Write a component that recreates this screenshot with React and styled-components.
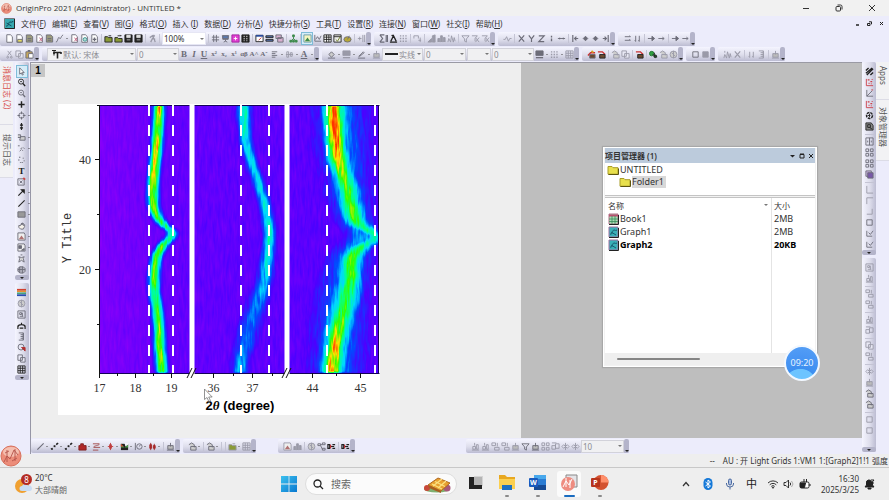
import React from 'react';
import styled, { createGlobalStyle, css } from 'styled-components';

const GlobalStyle = createGlobalStyle`
  * {
    box-sizing: border-box;
  }
  body {
    margin: 0;
    font-family: 'Noto Sans', 'Noto Sans CJK SC', sans-serif;
    font-size: 8px;
    color: #333;
    background: #eeeeee;
  }
  button, input, select {
    font-family: inherit;
    font-size: inherit;
    color: inherit;
    border: 0;
    padding: 0;
    margin: 0;
    background: none;
  }
`;

const Screen = styled.div`
  display: flex;
  flex-direction: column;
  min-height: 100vh;
  overflow: hidden;
  position: relative;
`;

const TitleBar = styled.header`
  display: flex;
  align-items: center;
  height: 16px;
  padding: 0 12px 0 1px;
  gap: 4px;
  background: #f1f1f1;
`;

const Title = styled.h1`
  flex: 1;
  margin: 0;
  font-family: 'Open Sans', 'Noto Sans', sans-serif;
  font-size: 8px;
  font-weight: 400;
  line-height: 16px;
`;

const WindowButtons = styled.div`
  display: flex;
  align-items: center;
  gap: ${p => (p.$small ? '4px' : '23px')};
`;

const GlyphButton = styled.button`
  display: flex;
  align-items: center;
  justify-content: center;
  width: ${p => p.$size || 10}px;
  height: ${p => p.$size || 10}px;
`;

const MenuBar = styled.nav`
  display: flex;
  align-items: center;
  height: 15px;
  padding: 0 4px;
  background: #ececfb;
`;

const MenuList = styled.div`
  display: flex;
  flex: 1;
  gap: 6px;
  margin-left: 6px;
`;

const MenuItem = styled.button`
  line-height: 14px;
  white-space: nowrap;
`;

const Dock = styled.div`
  display: flex;
  align-items: center;
  flex-shrink: 0;
  gap: 3px;
  background: #ececfb;
  ${p =>
    p.$vertical
      ? css`
          flex-direction: column;
          width: ${p.$wide ? '18px' : '14px'};
          padding-bottom: 2px;
          ${p.$wide && 'border-right: 1px solid #9696a6;'}
        `
      : css`
          height: ${p.$tall ? '16px' : '15px'};
        `}
`;

const Group = styled.div`
  display: flex;
  align-items: center;
  border-radius: 2px;
  ${p =>
    p.$vertical
      ? css`
          flex-direction: column;
          width: 14px;
          padding-top: 4px;
          background: linear-gradient(90deg, #f5f5ff, #dedeec 55%, #bcbcd2);
          ${p.$fill && 'flex: 1;'}
        `
      : css`
          height: 14px;
          padding-left: 4px;
          margin-left: ${p.$push || 0}px;
          background: linear-gradient(#f5f5ff, #dedeec 55%, #bcbcd2);
        `}
`;

const Handle = styled.span`
  display: flex;
  align-items: flex-end;
  justify-content: center;
  background: #b4b4ca;
  border-radius: 2px;
  ${p =>
    p.$vertical
      ? css`
          width: 14px;
          height: 5px;
          margin-top: auto;
        `
      : css`
          width: 5px;
          height: 14px;
        `}
  &::after {
    content: '';
    border: 2px solid transparent;
    border-top-color: #222;
    border-bottom: 0;
    margin-bottom: 1px;
  }
`;

const Tool = styled.button`
  display: flex;
  align-items: center;
  justify-content: center;
  width: 10px;
  height: 11px;
  ${p => p.$on && 'background: #d6ecf8; outline: 1px solid #7fbcd8;'}
`;

const Separator = styled.span`
  display: flex;
  align-items: center;
  justify-content: center;
  width: ${p => (p.$vertical ? '12px' : '4px')};
  height: ${p => (p.$vertical ? '4px' : '12px')};
  &::after {
    content: '';
    background: #c4c4d4;
    width: ${p => (p.$vertical ? '9px' : '1px')};
    height: ${p => (p.$vertical ? '1px' : '9px')};
  }
`;

const Caret = styled.span`
  display: flex;
  align-items: center;
  justify-content: center;
  width: ${p => (p.$tight ? 4 : 5)}px;
  &::after {
    content: '';
    border: ${p => (p.$combo ? 2 : 1)}px solid transparent;
    border-top-color: ${p => (p.$combo ? '#777' : '#444')};
    border-bottom: 0;
  }
`;

const SideTool = styled.div`
  display: flex;
  align-items: center;
  width: 18px;
  height: 11px;
  padding-left: 4px;
`;

const Combo = styled.label`
  display: flex;
  align-items: center;
  flex-shrink: 0;
  width: ${p => p.$w}px;
  height: 13px;
  margin-left: 1px;
  padding: 0 1px;
  background: ${p => (p.$live ? '#fff' : '#f0f0f2')};
  border: 1px solid ${p => (p.$live ? '#e6e6f4' : '#d2d2da')};
  color: ${p => (p.$live ? '#333' : '#8c8c92')};
  select {
    flex: 1;
    width: 0;
    min-width: 0;
    appearance: none;
    height: 11px;
    line-height: 11px;
    opacity: 1;
  }
`;

const Body = styled.div`
  display: flex;
  flex: 1;
  min-height: 0;
`;

const SideTabs = styled.div`
  display: flex;
  flex-direction: column;
  width: 13px;
  flex-shrink: 0;
  background: #ececfb;
`;

const SideTab = styled.button`
  writing-mode: vertical-rl;
  text-orientation: sideways;
  width: 13px;
  padding: ${p => p.$pad};
  font-size: 8px;
  line-height: 12px;
  text-align: left;
  background: #f2f2f4;
  border-bottom: 1px solid #dcdce6;
  color: ${p => (p.$alert ? '#d8504c' : '#555')};
`;

const Center = styled.div`
  display: flex;
  flex-direction: column;
  flex: 1;
  min-width: 0;
`;

const Workspace = styled.main`
  display: flex;
  flex: 1;
  position: relative;
  border-top: 1px solid #9a9aa4;
  background: #bebebe;
`;

const GraphWindow = styled.section`
  flex: 0 0 59%;
  background: #eeeeee;
`;

const LayerButton = styled.button`
  display: block;
  width: 14px;
  height: 13px;
  margin: 1px 0 27px;
  background: #c6c6c6;
  font-family: 'Liberation Sans', sans-serif;
  font-size: 10px;
  font-weight: 700;
  line-height: 13px;
  color: #000;
`;

const Sheet = styled.svg`
  display: block;
  margin-left: 27px;
  background: #fff;
`;

const Manager = styled.section`
  position: absolute;
  top: 84px;
  right: 45px;
  width: 214px;
  display: flex;
  flex-direction: column;
  padding: 0 1px 1px;
  background: #f2f2f2;
  border: 1px solid #fff;
  box-shadow: 0 0 1px 1px #a8a8a8;
`;

const ManagerHead = styled.div`
  display: flex;
  align-items: center;
  height: 15px;
  background: #bccbdc;
`;

const ManagerTitle = styled.h2`
  flex: 1;
  margin: 0;
  font-size: 8px;
  line-height: 15px;
  font-weight: 600;
`;

const Tree = styled.div`
  height: 33px;
  padding: 1px 2px;
  background: #fff;
  border-bottom: 1px solid #c4c4c4;
  font-size: 9px;
`;

const TreeRow = styled.div`
  display: flex;
  align-items: center;
  height: 12px;
  padding-left: ${p => (p.$child ? 12 : 0)}px;
  gap: 1px;
  line-height: 12px;
  span {
    padding-right: 2px;
    background: ${p => (p.$child ? '#d8d8d8' : 'none')};
  }
`;

const ListBox = styled.div`
  height: 156px;
  margin-top: 1px;
  border-top: 1px solid #c4c4c4;
  background: linear-gradient(90deg, #fff 166px, #e4e4e4 166px, #e4e4e4 167px, #fff 167px);
`;

const FileTable = styled.table`
  width: 100%;
  border-collapse: collapse;
  table-layout: fixed;
  font-size: 9px;
  line-height: 13px;
  th {
    font-size: 8px;
    font-weight: 400;
    text-align: left;
    height: 14px;
    padding: 0 3px;
  }
  th:first-child {
    width: 166px;
  }
  td {
    padding: 0 3px;
    height: 13px;
  }
`;

const Split = styled.span`
  display: flex;
  align-items: center;
  justify-content: ${p => (p.$ends ? 'space-between' : 'flex-start')};
  gap: 1px;
`;

const FileRow = styled.tr`
  font-weight: ${p => (p.$current ? 700 : 400)};
  color: ${p => (p.$current ? '#000' : '#333')};
`;

const ScrollTrack = styled.div`
  height: 12px;
  padding: 5px 12px;
  background: #efefef;
`;

const ScrollThumb = styled.div`
  width: 83px;
  height: 2px;
  border-radius: 1px;
  background: #858585;
`;

const Clock = styled.time`
  position: absolute;
  top: 282px;
  right: 42px;
  width: 36px;
  height: 36px;
  border: 2px solid #f2f8ff;
  border-radius: 50%;
  background: radial-gradient(circle at 45% 120%, #6cc4ff 38%, #3d8ff0 40%, #4a96f4 70%, #56a0f6);
  color: #e8f4ff;
  font-size: 9px;
  line-height: 32px;
  text-align: center;
`;

const StatusBar = styled.footer`
  display: flex;
  align-items: center;
  justify-content: flex-end;
  gap: 8px;
  height: 13px;
  padding-right: 1px;
  background: #eeeeee;
  white-space: nowrap;
`;

const Recorder = styled.button`
  position: absolute;
  left: 0;
  bottom: 33px;
  width: 22px;
  height: 22px;
`;

const Taskbar = styled.footer`
  display: grid;
  grid-template-columns: 1fr auto 1fr;
  align-items: center;
  height: 33px;
  padding: 0 14px;
  background: #eeeeee;
  border-top: 1px solid #c8c8c8;
`;

const Weather = styled.button`
  display: flex;
  align-items: center;
  gap: 2px;
  justify-self: start;
  text-align: left;
  line-height: 12px;
  small {
    display: block;
    font-size: 8px;
    color: #666;
  }
`;

const Apps = styled.div`
  display: flex;
  align-items: center;
  gap: 7px;
  margin-left: 3px;
`;

const AppButton = styled.button`
  display: flex;
  flex-direction: column;
  align-items: center;
  justify-content: space-between;
  width: 24px;
  height: 26px;
  padding-top: 3px;
  border-radius: 3px;
  background: ${p => (p.$active ? '#fbfbfb' : 'none')};
  &::after {
    content: '';
    width: ${p => (p.$active ? 11 : 4)}px;
    height: 2px;
    border-radius: 1px;
    background: ${p => (p.$active ? '#1a6cc0' : p.$open ? '#8a8a8a' : 'transparent')};
  }
`;

const Search = styled.label`
  display: flex;
  align-items: center;
  gap: 7px;
  width: 152px;
  height: 22px;
  padding: 0 4px 0 7px;
  border: 1px solid #dedede;
  border-radius: 11px;
  background: #fbfbfb;
  input {
    flex: 1;
    width: 0;
    font-size: 10px;
    outline: none;
  }
  input::placeholder {
    color: #666;
    opacity: 1;
  }
`;

const Tray = styled.div`
  display: flex;
  align-items: center;
  justify-self: end;
  gap: 10px;
`;

const LanguageButton = styled.button`
  font-size: 11px;
  line-height: 16px;
  color: #222;
`;

const TrayPair = styled.div`
  display: flex;
  align-items: center;
  gap: 4px;
`;

const DateTime = styled.div`
  text-align: right;
  line-height: 11px;
`;

/* ---------- icons, all drawn on a 10 x 10 grid ---------- */

const page = <path d="M2 .8h4l2.2 2.2v6.2H2z" fill="#fff" />;

const ICONS = {
  page,
  pageY: <g>{page}<path d="M3 6h5v3H3z" fill="#e8de60" /></g>,
  pageG: <g><path d="M1.5 1h5l2 2v6h-7z" fill="#9a9a7c" /><path d="M3 5h4M3 7h4" /></g>,
  pageR: <g>{page}<path d="M5 4l3 4M8 4L5 8" stroke="#c06080" /></g>,
  pageT: <g>{page}<circle cx="5.5" cy="6" r="2" stroke="#3a9090" fill="#b8e0d8" /></g>,
  pageK: <g>{page}<path d="M5 4v4M3 6h4" strokeWidth="1.6" /></g>,
  curve: <path d="M1 9c2 0 2-4 3-5s1 2 2 1 1-3 3-4" />,
  folder: <g><path d="M1 3h3l1 1h4v5H1z" fill="#8a9a38" /><path d="M5 2h3" /></g>,
  folderUp: <g><path d="M1 4h3l1 1h4v4H1z" fill="#8a9a38" /><path d="M4 2h4l-1-1" /></g>,
  save: <g><path d="M1 1h8v8H1z" fill="currentColor" /><path d="M3 1.5h4v2.5H3zM3 6.5h4" stroke="#fff" strokeWidth=".7" fill="#ddd" /></g>,
  run: <path d="M6 1l1 1-2 3 3 1M5 5L3 9M2 4l3-2 2 4 1 3" strokeWidth="1.5" />,
  print: <path d="M3 1v8M6 1v8M1 3.5h8M1 6.5h8" />,
  slide: <g><path d="M1 2h8M2 2v4h6V2M5 6v2M3 9l2-1 2 1" /><path d="M2 2h6v3H2z" fill="#5a7ab0" /></g>,
  magenta: <g><path d="M1 1h8v8H1z" fill="#e040d0" stroke="#a020a0" /><path d="M3 5h4M5 3v4" stroke="#fff" /></g>,
  film: <g><path d="M1 1h8v8H1z" fill="currentColor" /><path d="M3.5 2v6M6.5 2v6" stroke="#fff" strokeDasharray="1.5 1" /></g>,
  sheetB: <g><path d="M1 1.5h8v7H1z" fill="#fff" /><path d="M1 2h8" stroke="#2a4a9c" strokeWidth="2" /><path d="M4 7l3-3" stroke="#c03030" /></g>,
  rows: <g><path d="M1 2h8v2H1zM1 6h8v2H1z" fill="#5a78b8" /></g>,
  layers: <path d="M1 1h6v4H1zM3 4h6v5H3z" fill="#d8b0d0" />,
  tree: <g stroke="#3d8a4c"><path d="M5 3v3M2 8l3-3 3 3" /><path d="M4 1h2v2H4zM1 7h2v2H1zM7 7h2v2H7zM4 7h2v2H4z" fill="#3d8a4c" /></g>,
  picture: <g><path d="M1 1h8v8H1z" fill="#f4f4c0" stroke="#6a9aa8" /><path d="M2 8l3-4 3 4z" fill="#3d8a4c" stroke="none" /></g>,
  axes: <path d="M2 1v7h7M3 6l2-3 2 3 2-4" />,
  grid: <path d="M1 1h8v8H1zM1 3.5h8M1 6h8M4 1v8M6.5 1v8" fill="#fff" />,
  gridV: <g><path d="M1 1h8v8H1zM1 3h8" fill="#eee" /><path d="M3 6l2 2 3-5" stroke="#6a7a20" /></g>,
  disc: <g><ellipse cx="5" cy="6" rx="4" ry="3" fill="#b8a838" /><path d="M5 6l2-4" /></g>,
  split: <path d="M6.5 1v8M8.5 1v8M1 5h4M3 3v4" />,
  sigma: <path d="M1 1h5M1 9h5M1 1l3 4-3 4M8 1v8M9.5 1v8" strokeWidth="1.3" />,
  peak: <path d="M1 9h8M2 8l3-6 3 6M3 1l4 4" strokeWidth="1.5" />,
  dots: <path d="M1 2h8M1 5h8M1 8h8" strokeDasharray="1.5 1.5" strokeWidth="1.5" />,
  bracket: <path d="M1 5V2h5v3M8 4v5M6 7h3" />,
  ramp: <path d="M1 9l4-4v4zM6 9V2l3-1v8z" fill="currentColor" />,
  bars: <path d="M1 9V5h2v4M4 9V2h2v7M7 9V4h2v5" fill="currentColor" />,
  spikes: <path d="M1 9l1-4 2 4 1-7 2 7 1-5 1 4M2 1v2" />,
  funnel: <path d="M1 2h8L6 5.5V9L4 8V5.5z" />,
  funnelX: <path d="M1 2h6L4.500 5v3M5 4l4 5M9 4L5 9" />,
  wave: <path d="M.5 6h2l1.500-3 2 5 1.500-3h2" />,
  X: <path d="M2 1.500l6 7M8 1.500l-6 7" strokeWidth="1.300" />,
  Y: <path d="M2 1.500l3 4v3.500M8 1.500l-3 4" strokeWidth="1.300" />,
  Z: <path d="M2 2h6L2 8.500h6" strokeWidth="1.300" />,
  bar1: <path d="M5 2v2M5 5v3" strokeWidth="1.500" />,
  dash: <path d="M1 5h8M3 4v2M7 4v2" />,
  first: <path d="M2 1v8M8 5H4M6 3L4 5l2 2" strokeWidth="1.300" />,
  last: <path d="M8 1v8M2 5h4M4 3l2 2-2 2" strokeWidth="1.300" />,
  point: <path d="M5 2.500L7.500 5 5 7.500 2.500 5z" fill="currentColor" />,
  pairH: <path d="M2 3h6M2 7h6M7 2l1.500 1M7 6l1.500 1" />,
  pairV: <path d="M3 2v6M7 2v6M2 7l1 1.500M6 7l1 1.500" />,
  arrowR: <path d="M1 5h5M5.500 2.500L8.500 5l-3 2.500z" fill="currentColor" />,
  thinR: <path d="M1.500 5h6M6 3.500L8 5 6 6.500" />,
  cut: <path d="M3 1l4 5M7 1L3 6M2 8a1 1 0 1 0 2 0 1 1 0 1 0-2 0M6 8a1 1 0 1 0 2 0 1 1 0 1 0-2 0" />,
  copy: <path d="M1 1h5v6H1zM4 4h5v5H4z" fill="#e8e8f4" />,
  paste: <g><path d="M1 2h7v7H1z" fill="#c8a858" /><path d="M4 4h5v5H4z" fill="#fff" /><path d="M3 1h3" strokeWidth="2" /></g>,
  align: <path d="M2 2h6M2 4h4M2 6h6M2 8h4" />,
  dist: <path d="M1 5h8M2 2h2v6H2zM6 3h2v4H6z" />,
  bucket: <path d="M2 5l3-3 3 3-3 3zM1 9h8" fill="#ccc" />,
  swatch: <g><path d="M1 1h8v5H1z" fill="currentColor" /><path d="M1 8.500h8" strokeWidth="1.500" /></g>,
  pen: <path d="M2 7l5-5 1 1-5 4zM1 9h8" />,
  cluster: <path d="M5 1v4M2 4h6v4H2zM1 9h8" fill="#bbb" />,
  table: <path d="M1 1h8v8H1zM1 3.600h8M1 6.300h8M3.600 1v8M6.300 1v8" />,
  redbox: <g><path d="M1 6l3-3h5" stroke="#cc3030" strokeWidth="1.500" /><path d="M3 5h6v4H3z" fill="#6a4a30" /><path d="M5 1l2 2" stroke="#d8a020" strokeWidth="2" /></g>,
  redbox2: <g><path d="M1 2h5l3 3" stroke="#cc3030" strokeWidth="1.500" /><path d="M3 5h6v4H3z" fill="#6a4a30" /></g>,
  stack: <path d="M1 3l3-2 3 2v3M3 5h6v4H3z" fill="#ccc" />,
  green: <g><circle cx="3" cy="4" r="2.500" fill="#2fa040" stroke="#207030" /><path d="M4 5l5 3M6 3v3" /><circle cx="7" cy="7" r="1.500" fill="#205028" /></g>,
  ball: <g><circle cx="5" cy="5" r="3.800" fill="#ccc" /><path d="M3 3l4 4M5 1v8" /></g>,
  square: <path d="M2 2h6v6H2z" />,
  squareF: <path d="M2 2h6v6H2z" fill="currentColor" />,
  pointer: <path d="M3 1v7l1.800-1.500L6 9l1-.5-1.200-2.300H8z" fill="#fff" />,
  zoom: <g><circle cx="4.500" cy="4" r="2.800" /><path d="M6.500 6L9 9" strokeWidth="1.600" /><path d="M3.500 4h2" /></g>,
  plus: <path d="M5 1.500v7M1.500 5h7" strokeWidth="1.600" />,
  target: <g><circle cx="5" cy="5" r="3" /><path d="M5 .5v3M5 6.500v3M.5 5h3M6.500 5h3" /></g>,
  colon: <path d="M5 1v3M5 6v3M3.500 3L5 4.500 6.500 3M3.500 7L5 5.500 6.500 7" strokeWidth="1.300" />,
  select: <path d="M1 2h3v3H1M4 4h5v4H3z" fill="#ccc" />,
  mask: <path d="M1 2h2M4 5l3-1 2 2M3 8l2-2 2 2" strokeDasharray="2 1" />,
  scatter: <path d="M3 2v1M7 3v1M2 5v1M8 6v1M4 8v1M6 8v1" strokeWidth="1.500" />,
  note: <g><path d="M1 2h7v7H1zM3 4l3 3M6 4L3 7" /><path d="M7 1l2 2" stroke="#c44" strokeWidth="2" /></g>,
  arrowUp: <path d="M1.500 8.500L7 3M5 2h3v3z" strokeWidth="1.300" fill="currentColor" />,
  line: <path d="M1.500 8.500l7-7" strokeWidth="1.200" />,
  rect: <path d="M1 2h8v6H1z" fill="#999" />,
  hand: <path d="M2 5v2l2 2h3l1.500-3V4L7 5V2.500L6 4V2L5 4V2.500L4 5z" fill="#f4f0e8" />,
  image: <g><path d="M1 1h7l1 2v6H1z" fill="#eee" /><path d="M2 8l3-4 3 4z" fill="#b07070" stroke="none" /></g>,
  image2: <g><path d="M1 1h7l1 2v6H1z" fill="#eee" /><path d="M2 3h3v3H2zM5 8h3V6z" fill="currentColor" /></g>,
  people: <path d="M2 9l1-4-1-2 3 1 3-1-1 2 1 4-3-2zM4 1h2" fill="#ddd" />,
  globe: <path d="M3 2h4l2 2v3L7 9H4L1 7V4zM3 2v7M6 2v7M1 5h8" fill="#b4b4c0" />,
  rainbow: <g stroke="none"><path d="M0 1h10v2H0z" fill="#d04030" /><path d="M0 3h10v1.500H0z" fill="#e89030" /><path d="M0 5h10v1.500H0z" fill="#309868" /><path d="M0 7h10v2H0z" fill="#2850b0" /></g>,
  legend: <path d="M1 1h8v8H1zM3 3h2v2H3zM6 3v4M3 7h4" />,
  bow: <path d="M5 2v2M1 7c0-4 8-4 8 0M1 5v4M9 5v4M3 8h4" strokeWidth="1.300" />,
  ladder: <path d="M2 1h5v8H2M4 3h3M4 5h3M4 7h3M7 1v8" />,
  clockR: <g><circle cx="4.500" cy="4.500" r="3.300" /><path d="M5 5h4v4z" fill="#b03030" stroke="#b03030" /></g>,
  zigzag: <path d="M1 4l3-3M1 7l7-6M2 9l7-7M6 9l3-3" strokeWidth="1.500" />,
  axisR: <g stroke="#cc4048"><path d="M1.500 1v7.500H9" /><path d="M3 2h2M6 4h2M4 6h1M7 6v1M8 1v1" strokeWidth="1.400" /></g>,
  axisK: <g><path d="M2 1v7h7M2 8l6-6" /><path d="M7 1h2" stroke="#c44" /></g>,
  gear: <g><circle cx="5" cy="5" r="3.300" strokeWidth="1.600" strokeDasharray="3 1" /><path d="M5 3v4M3 5h3" /></g>,
  flag: <path d="M1 1h6l2 3v5H1zM3 3h3v3H3zM5 6l3 2" fill="#888" />,
  two: <path d="M1 1h8v8H1zM5 1v8M3 4v2M7 4v2" />,
  four: <path d="M1 1h3v3H1zM6 1h3v3H6zM1 6h3v3H1zM6 6h3v3H6z" />,
  purple: <g><path d="M1 1h6v6H1z" fill="#c8b0e0" /><path d="M3 3h6v6H3z" fill="#7858a8" /></g>,
  L: <path d="M2 1v8h7" />,
  cornerT: <path d="M2 9V2h7" />,
  cornerR: <path d="M2 8h6V2" />,
  check: <path d="M2 2v6h6M4 4l2 2 3-4" />,
  steps: <path d="M1 1h4v3H1zM4 6h5v3H4zM7 1v4" />,
  alignA: <path d="M1 9h8M2 5h3v3H2zM6 3h2v5H6zM4 1v3" />,
  ovals: <path d="M1 4h4v4H1zM5 2h4v5H5zM1 1h5" />,
  gem: <path d="M1 5l2-2 2 2-2 2zM5 5l2-2 2 2-2 2zM5 1v8" />,
  lineDots: <path d="M1 8l2-1M4 5l2-1M7 3l2-2M2 8h1M5 5h1M7 2h1" strokeWidth="1.600" />,
  column: <path d="M1 9V4h2V2h3v2h3v5z" fill="#b02828" stroke="#802020" />,
  ribbon: <path d="M1 2h7c1 2-7 2-6 4h7M1 9h6" stroke="#a04848" />,
  cross: <path d="M5 1v8M2 5h6M4 3h2v4H4z" fill="#cc3030" stroke="#c04040" />,
  candle: <path d="M3 1v8M7 2v7M2 3h2v4H2zM6 4h2v3H6z" fill="#cc3030" stroke="#a02828" />,
  terrain: <g stroke="none"><path d="M1 2h8v7H1z" fill="#222" /><path d="M1 2l4 4 4-3v3H1z" fill="#48a048" /><path d="M1 2l3 3H1z" fill="#d04030" /><path d="M5 1h4v2L6 5z" fill="#f4f4fc" /></g>,
  dial: <g><circle cx="6" cy="5" r="3" /><path d="M1.500 1v8M6 5l1-2" /></g>,
  hub: <path d="M1 2h3v2H1zM6 1h3v2H6zM6 7h3v2H6zM4 3l2 0M4 4l2 4" />,
  hubR: <g><path d="M1 3h2v4H1zM3 5h5M6 3h3M6 7h3" strokeWidth="1.300" /><path d="M4 3v4" stroke="#c03030" strokeWidth="1.300" /></g>,
};

const LETTERS = { B: 'B', I: 'I', U: 'U', sup: 'x²', sub: 'x₂', both: 'x¹', greek: 'αβ', bigA: 'A^', smallA: 'Aˇ', A: 'A', T: 'T' };

const Letter = styled.span`
  font-family: 'Liberation Serif', serif;
  font-size: ${p => (p.$small ? 7 : 9)}px;
  font-weight: 700;
  line-height: 10px;
  font-style: ${p => (p.$name === 'I' ? 'italic' : 'normal')};
  text-decoration: ${p => (p.$name === 'U' || p.$name === 'A' ? 'underline' : 'none')};
  color: ${p => p.$tone};
`;

const TONES = { g: '#9a9aa8', k: '#222', r: '#a83030', m: '#6c6c78' };

const Icon = ({ name, tone = 'm' }) => {
  if (LETTERS[name]) {
    return (
      <Letter $name={name} $small={LETTERS[name].length > 1} $tone={TONES[tone]}>
        {LETTERS[name]}
      </Letter>
    );
  }
  return (
    <svg width="9" height="9" viewBox="0 0 10 10" fill="none" stroke="currentColor" color={TONES[tone]} aria-hidden="true">
      {ICONS[name]}
    </svg>
  );
};

const ComboBox = ({ label, value, w, live, mark }) => (
  <Combo $w={w} $live={live}>
    {mark === 'font' && (
      <svg width="14" height="10" viewBox="0 0 14 10" stroke="#222" fill="none" aria-hidden="true">
        <path d="M3 1.500h4M5 1.500v5" />
        <path d="M5 3.500h7M8.500 3.500v6M5 3v2M12 3v2" strokeWidth="1.600" />
      </svg>
    )}
    {mark === 'line' && (
      <svg width="15" height="4" aria-hidden="true">
        <path d="M1 2h13" stroke="#222" strokeWidth="2" />
      </svg>
    )}
    <select aria-label={label} defaultValue={value}>
      <option>{value}</option>
    </select>
    <Caret $combo />
  </Combo>
);

/* tokens: "|" separator, "v" drop-down caret, "name.tone", "*name" pressed */
const Toolbar = ({ items, vertical, push, fill, carets, tight }) => (
  <Group $vertical={vertical} $push={push} $fill={fill} role="toolbar">
    {items.map((item, i) => {
      if (typeof item !== 'string') return <React.Fragment key={i}>{item}</React.Fragment>;
      return item.split(' ').map((token, j) => {
        const key = `${i}-${j}`;
        if (token === '|') return <Separator key={key} $vertical={vertical} />;
        if (token === 'v') return <Caret key={key} $tight={tight} />;
        const on = token[0] === '*';
        const hasCaret = token.endsWith('+');
        const [name, tone] = token.replace('*', '').replace('+', '').split('.');
        const tool = (
          <Tool key={key} $on={on} aria-label={name}>
            <Icon name={name} tone={tone} />
          </Tool>
        );
        return carets ? (
          <SideTool key={key}>
            {tool}
            {hasCaret && <Caret $tight />}
          </SideTool>
        ) : (
          tool
        );
      });
    })}
    <Handle $vertical={vertical} />
  </Group>
);

/* ---------- contour plot ---------- */

// each knot: y, centre x, half width, intensity 0..1
const PEAKS = [
  { base: 0.13, knots: [[1, 101, 8, 0.84], [24, 100, 8, 0.84], [51, 98, 8, 0.86], [71, 96, 8, 0.86], [91, 95, 8, 0.8], [104, 96, 8, 0.78], [114, 100, 8, 0.72], [122, 107, 8, 0.62], [128, 114, 8, 0.56], [134, 112, 8, 0.6], [141, 105, 8, 0.68], [151, 99.5, 8, 0.75], [168, 96.5, 8, 0.73], [184, 96.5, 8, 0.71], [204, 99, 8, 0.68], [224, 101, 8, 0.77], [244, 102, 8, 0.79], [269, 104, 8, 0.76]] },
  { base: 0.14, knots: [[1, 186, 9, 0.53], [21, 186.5, 9, 0.52], [38, 188, 8, 0.48], [58, 193.5, 8, 0.45], [78, 200, 8, 0.45], [98, 206.5, 8, 0.48], [118, 210, 8, 0.5], [134, 211.5, 8, 0.53], [158, 209, 9, 0.48], [178, 206, 10, 0.42], [198, 200, 12, 0.35], [218, 193, 13, 0.32], [238, 188, 13, 0.32], [251, 184, 11, 0.36], [269, 182, 10, 0.45]] },
  { base: 0.14, knots: [[1, 283, 32, 0.31], [51, 286, 31, 0.32], [91, 291, 26, 0.32], [118, 298, 23, 0.35], [132, 304, 18, 0.38], [151, 292, 26, 0.34], [201, 283, 31, 0.33], [236, 281, 32, 0.32], [269, 280, 31, 0.32]] },
  { base: 0.3, knots: [[1, 276, 13, 0.97], [24, 277, 13, 0.97], [51, 279.5, 12, 0.93], [61, 282, 12, 0.8], [81, 288.5, 13, 0.71], [98, 292, 13, 0.69], [114, 296, 12, 0.74], [122, 302, 12, 0.64], [128, 312, 10, 0.58], [132, 317, 8, 0.54], [138, 312, 10, 0.58], [144, 301, 13, 0.64], [154, 294, 12, 0.75], [178, 291.5, 13, 0.68], [191, 289, 15, 0.64], [211, 284, 15, 0.67], [228, 279.5, 14, 0.8], [244, 277, 13, 0.87], [269, 274, 13, 0.92]] },
];

const LEVELS = [1, 0.88, 0.76, 0.64, 0.52, 0.4, 0.28];

const grey = v => {
  const n = Math.round(v * 255);
  return `rgb(${n},${n},${n})`;
};

// smooths the knots with a Catmull-Rom step so that the ribbon has no corners
const refine = knots => {
  const out = [];
  for (let i = 0; i < knots.length - 1; i++) {
    const [a, b, c, d] = [knots[i - 1] || knots[i], knots[i], knots[i + 1], knots[i + 2] || knots[i + 1]];
    for (let s = 0; s < 4; s++) {
      const t = s / 4;
      out.push(
        b.map((v, k) =>
          k === 1
            ? 0.5 * (2 * v + (c[k] - a[k]) * t + (2 * a[k] - 5 * v + 4 * c[k] - d[k]) * t * t + (3 * v - a[k] - 3 * c[k] + d[k]) * t ** 3)
            : v + (c[k] - v) * t
        )
      );
    }
  }
  out.push(knots[knots.length - 1]);
  return out;
};

const Ribbon = ({ id, peak }) => {
  const pts = refine(peak.knots);
  return LEVELS.map((level, i) => {
    const weight = Math.exp(-2.6 * level * level);
    const left = pts.map(([y, x, w]) => `${x - w * level},${y}`);
    const right = pts.map(([y, x, w]) => `${x + w * level},${y}`).reverse();
    return (
      <g key={level}>
        <linearGradient id={`${id}-${i}`} gradientUnits="userSpaceOnUse" x1="0" x2="0" y1="1" y2="269">
          {peak.knots.map(([y, , , v]) => (
            <stop key={y} offset={(y - 1) / 268} stopColor={grey(Math.min(1, peak.base + (v - peak.base) * weight * 1.2))} />
          ))}
        </linearGradient>
        <polygon points={[...left, ...right].join(' ')} fill={`url(#${id}-${i})`} />
      </g>
    );
  });
};

const Y_TICKS = [[55.5, '40'], [165.5, '20']];
const X_TICKS = [[41.5, '17'], [77.5, '18'], [113.5, '19'], [155.5, '36'], [194.5, '37'], [254.5, '44'], [302.5, '45']];
const GUIDES = [91, 115, 183, 211, 269, 317];
const BREAKS = [134, 229];

const Plot = () => (
  <Sheet width="322" height="311" viewBox="0 0 322 311" role="img" aria-label="Contour plot">
    <defs>
      <filter id="rainbow" filterUnits="userSpaceOnUse" x="42" y="1" width="279" height="268" colorInterpolationFilters="sRGB">
        <feGaussianBlur in="SourceGraphic" stdDeviation="1.1 .8" result="soft" />
        <feTurbulence type="fractalNoise" baseFrequency=".38 .06" numOctaves="2" seed="7" />
        <feColorMatrix values="1 0 0 0 0  1 0 0 0 0  1 0 0 0 0  0 0 0 0 1" result="grain" />
        <feComposite in="soft" in2="grain" operator="arithmetic" k1=".5" k2=".75" k3=".07" k4="-.035" />
        <feComponentTransfer>
          <feFuncR type="table" tableValues=".56 .3 0 0 0 .2 1 1" />
          <feFuncG type="table" tableValues="0 0 .3 .85 1 1 .88 .2" />
          <feFuncB type="table" tableValues=".98 1 1 1 .6 0 0 0" />
        </feComponentTransfer>
      </filter>
      <linearGradient id="floor">
        <stop offset="0" stopColor="#0a0a0a" />
        <stop offset=".3" stopColor="#181818" />
        <stop offset="1" stopColor="#202020" />
      </linearGradient>
    </defs>
    <g filter="url(#rainbow)">
      <rect x="38" y="-3" width="288" height="276" fill="url(#floor)" />
      {PEAKS.map((peak, i) => (
        <Ribbon key={i} id={`peak${i}`} peak={peak} />
      ))}
    </g>
    <path d="M41.500 269.500h280M41.500 1.500h280M320.500 1v268" stroke="#14005a" fill="none" />
    <path d={BREAKS.map(x => `M${x} 0v271`).join('')} stroke="#fff" strokeWidth="5" />
    <path d={BREAKS.map(x => `M${x - 5} 274l5-10M${x - 1} 274l5-10`).join('')} stroke="#111" />
    <path d={GUIDES.map(x => `M${x} 1v268`).join('')} stroke="#fff" strokeWidth="2" strokeDasharray="11 9" />
    <path
      d={`M41.500 1v273M39 1.500h3M39 110.500h3M39 220.500h3${Y_TICKS.map(([y]) => `M37 ${y}h5`).join('')}${X_TICKS.map(([x]) => `M${x} 269v5`).join('')}M59.500 269v3M95.500 269v3M175.500 269v3M214.500 269v3M278.500 269v3`}
      stroke="#111"
    />
    <g fontFamily="'Liberation Serif', serif" fontSize="12" fill="#333">
      {Y_TICKS.map(([y, text]) => (
        <text key={text} x="33" y={y + 4} textAnchor="end">{text}</text>
      ))}
      {X_TICKS.map(([x, text]) => (
        <text key={text} x={x} y="288" textAnchor="middle">{text}</text>
      ))}
    </g>
    <text transform="translate(13 134) rotate(-90)" textAnchor="middle" fontFamily="'Liberation Mono', monospace" fontSize="12" fill="#333">
      Y Title
    </text>
    <text x="182" y="306" textAnchor="middle" fontFamily="'Liberation Sans', sans-serif" fontSize="13" fontWeight="700" fill="#000">
      2<tspan fontFamily="'Liberation Serif', serif" fontStyle="italic">θ</tspan> (degree)
    </text>
    <path d="M146.500 285v10.500l2.500-2 1.800 4 1.700-.8-1.800-3.700h3.500z" fill="#fff" stroke="#777" strokeWidth=".8" />
  </Sheet>
);

/* ---------- project manager ---------- */

const FolderIcon = () => (
  <svg width="12" height="10" viewBox="0 0 12 10" aria-hidden="true">
    <path d="M1 1.500h4l1 1.200h5v6.500H1z" fill="#e8e04c" stroke="#a89c28" />
    <path d="M1.500 9.500h10V3.500" stroke="#5c5410" fill="none" />
  </svg>
);

const FileIcon = ({ kind }) => (
  <svg width="11" height="12" viewBox="0 0 11 12" aria-hidden="true">
    <path d="M1 1h9v10H1z" fill={kind === 'book' ? '#a8dcb4' : '#38b0b8'} stroke={kind === 'book' ? '#b07088' : '#a070a0'} />
    {kind === 'book' ? (
      <g>
        <path d="M1 2.500h9" stroke="#b85070" strokeWidth="2" />
        <path d="M1 6h9M1 8.500h9M4 3v8M7 3v8" stroke="#3a8a5c" strokeWidth=".8" />
      </g>
    ) : (
      <path d="M2 8c3 1 2-4 4-4s1 1 3 0M3 6l5 3" stroke="#155a70" fill="none" />
    )}
    <path d="M1 11.500h9.500V2" stroke="#222" fill="none" />
  </svg>
);

const FILES = [
  { name: 'Book1', size: '2MB', kind: 'book' },
  { name: 'Graph1', size: '2MB', kind: 'graph' },
  { name: 'Graph2', size: '20KB', kind: 'graph', current: true },
];

const ProjectManager = () => (
  <Manager>
    <ManagerHead>
      <ManagerTitle>项目管理器 (1)</ManagerTitle>
      <GlyphButton $size={9} aria-label="Options">
        <svg width="6" height="6"><path d="M0 2h5L2.500 4.500z" fill="#222" /></svg>
      </GlyphButton>
      <GlyphButton $size={9} aria-label="Maximize">
        <svg width="6" height="6"><path d="M1 1.500h4v3.500H1zM1 1h4" stroke="#222" fill="none" /></svg>
      </GlyphButton>
      <GlyphButton $size={9} aria-label="Close">
        <svg width="6" height="6"><path d="M1 1l4 4M5 1L1 5" stroke="#222" /></svg>
      </GlyphButton>
    </ManagerHead>
    <Tree>
      <TreeRow>
        <FolderIcon />
        <span>UNTITLED</span>
      </TreeRow>
      <TreeRow $child>
        <FolderIcon />
        <span>Folder1</span>
      </TreeRow>
    </Tree>
    <ListBox>
      <FileTable>
        <thead>
          <tr>
            <th><Split $ends>名称<Caret $combo /></Split></th>
            <th>大小</th>
          </tr>
        </thead>
        <tbody>
          {FILES.map(file => (
            <FileRow key={file.name} $current={file.current}>
              <td><Split><FileIcon kind={file.kind} />{file.name}</Split></td>
              <td>{file.size}</td>
            </FileRow>
          ))}
        </tbody>
      </FileTable>
    </ListBox>
    <ScrollTrack>
      <ScrollThumb />
    </ScrollTrack>
  </Manager>
);

/* ---------- shell ---------- */

const MENUS = [
  ['文件', 'F'], ['编辑', 'E'], ['查看', 'V'], ['图', 'G'], ['格式', 'O'], ['插入 ', 'I'], ['数据', 'D'], ['分析', 'A'],
  ['快捷分析', 'S'], ['工具', 'T'], ['设置', 'R'], ['连接', 'N'], ['窗口', 'W'], ['社交', 'I'], ['帮助', 'H'],
];

const OriginMark = ({ size }) => (
  <svg width={size} height={size} viewBox="0 0 22 22" aria-hidden="true">
    <circle cx="11" cy="11" r="10" fill="#ec8d7a" stroke="#d8705c" />
    <ellipse cx="11" cy="7" rx="8" ry="5" fill="#f8ccbe" opacity=".8" />
    <path d="M4 17l3-6 3 3 4-9 4 5M5 8l4-2M12 16l5-3M7 5v12M15 4v12" stroke="#b4544a" strokeWidth=".9" fill="none" />
  </svg>
);

const App = () => (
  <>
    <GlobalStyle />
    <Screen>
      <TitleBar>
        <OriginMark size={11} />
        <Title>OriginPro 2021 (Administrator) - UNTITLED *</Title>
        <WindowButtons>
          <GlyphButton aria-label="Minimize">
            <svg width="8" height="8"><path d="M1 4.500h6" stroke="#333" /></svg>
          </GlyphButton>
          <GlyphButton aria-label="Restore">
            <svg width="8" height="8" fill="none" stroke="#333"><rect x="1" y="2.500" width="4.500" height="4.500" rx="1" /><path d="M2.500 1h3a1.500 1.500 0 0 1 1.500 1.500v3" /></svg>
          </GlyphButton>
          <GlyphButton aria-label="Close">
            <svg width="8" height="8"><path d="M1 1l6 6M7 1L1 7" stroke="#333" /></svg>
          </GlyphButton>
        </WindowButtons>
      </TitleBar>

      <MenuBar>
        <svg width="11" height="11" viewBox="0 0 11 11" aria-hidden="true">
          <path d="M.5.5h10v10H.5z" fill="#38a8b0" stroke="#777" />
          <path d="M2 8c3 1 2-4 4-4s2 1 3-1M2.500 5l5 3" stroke="#124c60" fill="none" />
          <path d="M1 10.500h9.500V1" stroke="#222" fill="none" />
        </svg>
        <MenuList>
          {MENUS.map(([text, hotkey]) => (
            <MenuItem key={text}>{text}(<u>{hotkey}</u>)</MenuItem>
          ))}
        </MenuList>
        <WindowButtons $small>
          <GlyphButton $size={8} aria-label="Minimize graph">
            <svg width="5" height="5"><path d="M1 4h3" stroke="#222" strokeWidth="1.500" /></svg>
          </GlyphButton>
          <GlyphButton $size={8} aria-label="Restore graph">
            <svg width="5" height="5" fill="none" stroke="#222"><path d="M.5 2.500h2.500v2H.5zM2 .8h2.500v2.500" /></svg>
          </GlyphButton>
          <GlyphButton $size={8} aria-label="Close graph">
            <svg width="5" height="5"><path d="M1 1l3 3M4 1L1 4" stroke="#222" /></svg>
          </GlyphButton>
        </WindowButtons>
      </MenuBar>

      <Dock>
        <Toolbar
          items={[
            'page pageY pageG pageR pageG curve v pageR pageT pageK | folder.k folderUp.k save.k save.k | run.g |',
            <ComboBox label="Zoom" value="100%" w={44} live />,
            '| print slide magenta film.k | sheetB.k rows.k layers | tree | *picture axes grid.k gridV.k disc | split.g',
          ]}
        />
        <Toolbar items={['sigma peak.k dots.g | bracket.g | ramp.g bars.g spikes.g | funnel.g funnelX.g funnelX.g']} />
        <Toolbar items={['wave.g | X Y Z bar1 dash | first point point last']} />
        <Toolbar items={['pairH pairV | arrowR thinR | arrowR thinR']} />
      </Dock>

      <Dock $tall>
        <Toolbar items={['cut.g copy.g paste']} />
        <Toolbar
          items={[
            <ComboBox label="Font" value="默认: 宋体" w={89} mark="font" />,
            <ComboBox label="Font size" value="0" w={42} />,
            'B I U sup sub both greek bigA smallA align v dist.g v A v',
          ]}
        />
        <Toolbar
          items={[
            'bucket v swatch.g v pen v cluster.g',
            <ComboBox label="Line style" value="实线" w={41} mark="line" />,
            <ComboBox label="Line width" value="0" w={42} />,
            <ComboBox label="Pattern" value="" w={24} />,
            <ComboBox label="Pattern size" value="0" w={42} />,
            'swatch v dots.g v table.g',
          ]}
        />
        <Toolbar items={['redbox redbox2.k | stack.g copy.g | redbox2.k | green.k stack.g ball.g']} />
        <Toolbar items={['square squareF.g']} />
        <Toolbar items={['spikes.g X.g | pairV.g ladder.g | cluster.g']} />
      </Dock>

      <Body>
        <SideTabs>
          <SideTab $alert $pad="4px 0 15px">消息日志 (2)</SideTab>
          <SideTab $pad="9px 0 11px">提示日志</SideTab>
        </SideTabs>
        <Dock $vertical $wide>
          <Toolbar
            vertical
            carets
            items={['*pointer zoom.k zoom plus.k target+ colon.k select+ mask+ scatter T.k note arrowUp.k+ line.k+ rect+ hand image+ image2+ people globe']}
          />
          <Toolbar vertical carets items={['rainbow ball.g legend bow.k ladder clockR copy table.k']} />
        </Dock>
        <Center>
          <Workspace>
            <GraphWindow>
              <LayerButton>1</LayerButton>
              <Plot />
            </GraphWindow>
            <ProjectManager />
            <Clock>09:20</Clock>
          </Workspace>
          <Dock $tall>
            <Toolbar tight items={['line v lineDots.k v lineDots.k v column v ribbon v cross v terrain v dial v candle v | cluster']} />
            <Toolbar tight items={['stack v | stack v | | folder.g v table.g']} />
            <Toolbar push={19} items={['image.g bars.g | ball.g hub hubR.k | hubR.k']} />
            <Toolbar
              push={108}
              items={[
                'alignA.g alignA.g steps.g steps.g cluster.g funnel cluster four.g ovals.g gem.g gem.g',
                <ComboBox label="Size" value="10" w={43} />,
              ]}
            />
          </Dock>
        </Center>
        <Dock $vertical>
          <Toolbar
            vertical
            items={['zigzag.k axisR axisK axisR gear.k flag.k | two four four purple | L.g cornerT.g cornerR.g square check check']}
          />
          <Toolbar
            vertical
            fill
            items={['legend.g alignA.g | steps.g steps.g | alignA.g ovals.g | copy.g steps.g | gem.g cluster.g stack stack | square.g square.g']}
          />
        </Dock>
        <SideTabs>
          <SideTab $pad="4px 0 14px">Apps</SideTab>
          <SideTab $pad="7px 0 13px">对象管理器</SideTab>
        </SideTabs>
      </Body>

      <StatusBar>
        <span>--</span>
        <span>AU : 开 Light Grids 1:VM1 1:[Graph2]1!1 弧度</span>
      </StatusBar>

      <Taskbar>
        <Weather>
          <svg width="19" height="20" viewBox="0 0 19 20" aria-hidden="true">
            <circle cx="8" cy="12" r="7" fill="#f0a030" />
            <path d="M8 17a2.500 2.500 0 0 1 0-5 3.500 3.500 0 0 1 6-.5 2.500 2.500 0 0 1 2 5.500z" fill="#c8dcf4" />
            <circle cx="12.500" cy="5.500" r="5.500" fill="#b42c24" />
            <text x="12.500" y="8.500" textAnchor="middle" fontSize="8" fill="#fff">8</text>
          </svg>
          <span>
            20°C
            <small>大部晴朗</small>
          </span>
        </Weather>

        <Apps>
          <GlyphButton $size={18} aria-label="Start">
            <svg width="16" height="16" viewBox="0 0 16 16">
              <linearGradient id="win" x1="0" y1="0" x2="1" y2="1">
                <stop offset="0" stopColor="#3cc0ee" />
                <stop offset="1" stopColor="#0878d0" />
              </linearGradient>
              <path d="M0 0h7.600v7.600H0zM8.400 0H16v7.600H8.400zM0 8.400h7.600V16H0zM8.400 8.400H16V16H8.400z" fill="url(#win)" />
            </svg>
          </GlyphButton>
          <Search>
            <svg width="11" height="11" viewBox="0 0 11 11" fill="none" stroke="#222" strokeWidth="1.300" aria-hidden="true">
              <circle cx="4.500" cy="4.500" r="3.500" />
              <path d="M7 7l3 3" />
            </svg>
            <input type="search" aria-label="搜索" placeholder="搜索" />
            <svg width="29" height="17" viewBox="0 0 29 17" aria-hidden="true">
              <ellipse cx="14" cy="13" rx="13" ry="3.500" fill="#80b070" />
              <circle cx="4" cy="12" r="3" fill="#c84838" />
              <circle cx="24" cy="12" r="3.500" fill="#a85878" />
              <path d="M5 9L15 2l12 5-9 8z" fill="#e8a030" stroke="#b06820" />
              <path d="M9 8l10 5M12 5.500l10 5M10 10l9-7M15 12l8-7" stroke="#fbe080" strokeWidth="1.300" />
              <path d="M5 9l13 6v2L6 12z" fill="#a85c20" />
            </svg>
          </Search>
          <AppButton aria-label="Task view">
            <svg width="14" height="16" viewBox="0 0 14 16">
              <path d="M5 2h9v10H5z" fill="#d4d4d4" />
              <path d="M0 3h5v8h8v4H0z" fill="#222" />
              <path d="M5 3h8v8H5z" fill="#b4b4b4" />
            </svg>
          </AppButton>
          <AppButton $open aria-label="Explorer">
            <svg width="18" height="17" viewBox="0 0 18 17">
              <path d="M1 1h6l2 2h8v12H1z" fill="#e8a820" />
              <path d="M1 5h16v10H1z" fill="#fcd050" />
              <path d="M4 11h10v5H4z" fill="#2070c0" />
            </svg>
          </AppButton>
          <AppButton $open aria-label="Word">
            <svg width="18" height="17" viewBox="0 0 18 17">
              <rect x="5" y="1" width="12" height="15" rx="1" fill="#2b7cd3" />
              <path d="M5 1h12v4H5z" fill="#48a8ec" />
              <path d="M5 11h12v5H5z" fill="#164a94" />
              <rect x="0" y="4" width="9" height="9" rx="1" fill="#185abd" />
              <text x="4.500" y="11" textAnchor="middle" fontSize="7" fontWeight="700" fill="#fff">W</text>
            </svg>
          </AppButton>
          <AppButton $active aria-label="OriginPro">
            <svg width="18" height="18" viewBox="0 0 18 18">
              <path d="M6 1h11v12H6z" fill="#e4e4e8" stroke="#888" />
              <circle cx="8" cy="10" r="7" fill="#ee8c80" />
              <path d="M3 13l3-6 3 4 3-6M6 4v9M10 6v8" stroke="#fff" fill="none" />
            </svg>
          </AppButton>
          <AppButton $open aria-label="PowerPoint">
            <svg width="18" height="17" viewBox="0 0 18 17">
              <circle cx="10" cy="8.500" r="7.500" fill="#d35230" />
              <path d="M10 1a7.500 7.500 0 0 1 7.500 7.500H10z" fill="#ff8f6b" />
              <rect x="0" y="4" width="9" height="9" rx="1" fill="#b7341c" />
              <text x="4.500" y="11" textAnchor="middle" fontSize="7" fontWeight="700" fill="#fff">P</text>
            </svg>
          </AppButton>
        </Apps>

        <Tray>
          <GlyphButton $size={12} aria-label="Hidden icons">
            <svg width="8" height="6"><path d="M1 5l3-3.500L7 5" fill="none" stroke="#333" strokeWidth="1.200" /></svg>
          </GlyphButton>
          <GlyphButton $size={12} aria-label="Bluetooth">
            <svg width="10" height="12" viewBox="0 0 10 12">
              <rect x=".5" y="0" width="9" height="12" rx="4.500" fill="#1478d8" />
              <path d="M2.500 4l5 4L5 10V2l2.500 2-5 4" fill="none" stroke="#fff" />
            </svg>
          </GlyphButton>
          <GlyphButton $size={12} aria-label="Microphone">
            <svg width="10" height="12" viewBox="0 0 10 12" fill="none" stroke="#4868a0">
              <rect x="3.500" y="1" width="3" height="6" rx="1.500" fill="#a8bce0" />
              <path d="M1.500 5v1a3.500 3 0 0 0 7 0V5M5 9v2.500" />
            </svg>
          </GlyphButton>
          <LanguageButton>中</LanguageButton>
          <TrayPair>
            <GlyphButton $size={12} aria-label="Wi-Fi">
              <svg width="12" height="10" viewBox="0 0 12 10" fill="none" stroke="#333">
                <path d="M1 4a7 7 0 0 1 10 0M2.700 5.800a4.600 4.600 0 0 1 6.600 0M4.300 7.400a2.400 2.400 0 0 1 3.400 0" />
                <circle cx="6" cy="8.600" r=".6" fill="#333" />
              </svg>
            </GlyphButton>
            <GlyphButton $size={12} aria-label="Volume">
              <svg width="12" height="10" viewBox="0 0 12 10" fill="none" stroke="#333">
                <path d="M1 3.500h2L5.500 1v8L3 6.500H1z" />
                <path d="M7 3.500q1.500 1.500 0 3" />
                <path d="M8.500 2q3 3 0 6" stroke="#aaa" />
              </svg>
            </GlyphButton>
            <GlyphButton $size={12} aria-label="Battery">
              <svg width="12" height="10" viewBox="0 0 12 10">
                <rect x="1" y="3" width="9" height="6" rx="1.500" fill="#fff" stroke="#222" />
                <path d="M1.500 4h5l-1 4.500h-4zM11 5v2" fill="#222" stroke="#222" />
                <path d="M5 0v3M7.500 0v3" stroke="#222" />
              </svg>
            </GlyphButton>
          </TrayPair>
          <TrayPair>
            <DateTime>
              <div>16:30</div>
              <div>2025/3/25</div>
            </DateTime>
            <GlyphButton $size={12} aria-label="Notifications">
              <svg width="11" height="11" viewBox="0 0 11 11">
                <path d="M1 8l1.500-2V4a2.500 2.500 0 0 1 5-1h1v3L10 8zM4 9h3v1H4z" fill="#222" stroke="#222" />
                <path d="M7 1h3L7.500 4H10" stroke="#222" fill="none" />
              </svg>
            </GlyphButton>
          </TrayPair>
        </Tray>
      </Taskbar>

      <Recorder aria-label="Origin">
        <OriginMark size={22} />
      </Recorder>
    </Screen>
  </>
);

export default App;
